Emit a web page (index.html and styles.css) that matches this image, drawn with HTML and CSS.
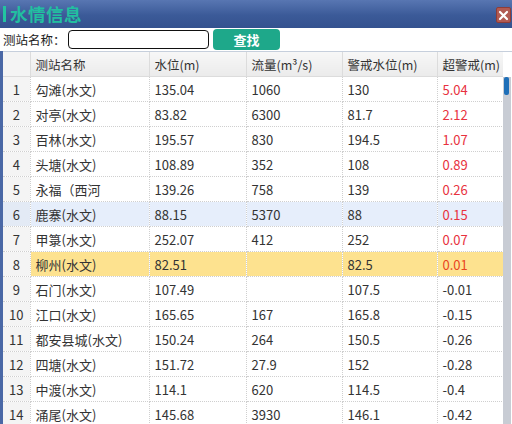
FILE: index.html
```html
<!DOCTYPE html>
<html>
<head>
<meta charset="utf-8">
<link rel="stylesheet" href="styles.css">
</head>
<body>
<div class="win">
  <div class="titlebar">
    <span class="bar"></span><span class="title">水情信息</span>
    <span class="close"><svg width="11" height="11" viewBox="0 0 11 11"><path d="M2 2L9 9M9 2L2 9" stroke="#fff" stroke-width="2.2" stroke-linecap="round"/></svg></span>
  </div>
  <div class="search">
    <span class="label">测站名称：</span>
    <input class="inp" type="text">
    <button class="btn">查找</button>
  </div>
  <div class="gridwrap">
    <div class="grid">
      <table>
        <colgroup><col class="c0"><col class="c1"><col class="c2"><col class="c3"><col class="c4"><col class="c5"></colgroup>
        <thead>
          <tr><th class="rn"></th><th>测站名称</th><th>水位(m)</th><th>流量(m³/s)</th><th>警戒水位(m)</th><th>超警戒(m)</th></tr>
        </thead>
        <tbody>
          <tr><td class="rn">1</td><td>勾滩(水文)</td><td>135.04</td><td>1060</td><td>130</td><td class="red">5.04</td></tr>
          <tr><td class="rn">2</td><td>对亭(水文)</td><td>83.82</td><td>6300</td><td>81.7</td><td class="red">2.12</td></tr>
          <tr><td class="rn">3</td><td>百林(水文)</td><td>195.57</td><td>830</td><td>194.5</td><td class="red">1.07</td></tr>
          <tr><td class="rn">4</td><td>头塘(水文)</td><td>108.89</td><td>352</td><td>108</td><td class="red">0.89</td></tr>
          <tr><td class="rn">5</td><td>永福（西河</td><td>139.26</td><td>758</td><td>139</td><td class="red">0.26</td></tr>
          <tr class="hover"><td class="rn">6</td><td>鹿寨(水文)</td><td>88.15</td><td>5370</td><td>88</td><td class="red">0.15</td></tr>
          <tr><td class="rn">7</td><td>甲箓(水文)</td><td>252.07</td><td>412</td><td>252</td><td class="red">0.07</td></tr>
          <tr class="sel"><td class="rn">8</td><td>柳州(水文)</td><td>82.51</td><td></td><td>82.5</td><td class="red">0.01</td></tr>
          <tr><td class="rn">9</td><td>石门(水文)</td><td>107.49</td><td></td><td>107.5</td><td>-0.01</td></tr>
          <tr><td class="rn">10</td><td>江口(水文)</td><td>165.65</td><td>167</td><td>165.8</td><td>-0.15</td></tr>
          <tr><td class="rn">11</td><td>都安县城(水文)</td><td>150.24</td><td>264</td><td>150.5</td><td>-0.26</td></tr>
          <tr><td class="rn">12</td><td>四塘(水文)</td><td>151.72</td><td>27.9</td><td>152</td><td>-0.28</td></tr>
          <tr><td class="rn">13</td><td>中渡(水文)</td><td>114.1</td><td>620</td><td>114.5</td><td>-0.4</td></tr>
          <tr><td class="rn">14</td><td>涌尾(水文)</td><td>145.68</td><td>3930</td><td>146.1</td><td>-0.42</td></tr>
        </tbody>
      </table>
    </div>
    <div class="scroll"><div class="thumb"></div></div>
  </div>
</div>
</body>
</html>
```

FILE: styles.css
```css
html, body {
  margin: 0;
  padding: 0;
}
body {
  width: 512px;
  height: 424px;
  overflow: hidden;
  font-family: "Noto Sans CJK SC", "Microsoft YaHei", sans-serif;
  font-size: 12px;
  color: #333;
  background: #4a68a6;
}
.win {
  display: flex;
  flex-direction: column;
  height: 424px;
}
.titlebar {
  height: 28px;
  flex: none;
  display: flex;
  align-items: center;
  background: linear-gradient(#5876b2, #3b5a98 55%, #34528f);
  position: relative;
}
.bar {
  width: 3px;
  height: 16px;
  background: #22c4a0;
  margin-left: 3px;
  margin-right: 4px;
}
.title {
  color: #22bfa0;
  font-weight: bold;
  font-size: 17.5px;
  letter-spacing: 0.5px;
  line-height: 28px;
}
.close {
  position: absolute;
  right: 1px;
  top: 7px;
  width: 13px;
  height: 14px;
  background: #b15a52;
  border: 1px solid #8e3d38;
  border-radius: 2px;
  display: flex;
  align-items: center;
  justify-content: center;
}
.search {
  height: 23px;
  flex: none;
  background: #fff;
  display: flex;
  align-items: center;
}
.label {
  font-size: 12.5px;
  color: #222;
  margin-left: 3px;
  width: 65px;
  flex: none;
  white-space: nowrap;
  overflow: hidden;
}
.inp {
  box-sizing: border-box;
  flex: none;
  width: 141px;
  height: 19px;
  border: 1px solid #111;
  border-radius: 4px;
  margin: 0;
  padding: 0;
  outline: none;
}
.btn {
  box-sizing: border-box;
  flex: none;
  margin-left: 4px;
  width: 67px;
  height: 21px;
  border: none;
  border-radius: 4px;
  background: #1ea88a;
  color: #fff;
  font-family: "Noto Sans CJK SC", sans-serif;
  font-size: 13px;
  font-weight: bold;
  padding: 0;
}
.gridwrap {
  flex: 1;
  display: flex;
  margin-left: 3px;
  background: #fff;
  border-top: 1px solid #c6cfdc;
  overflow: hidden;
}
.grid {
  width: 500px;
  flex: none;
  overflow: hidden;
}
table {
  border-collapse: collapse;
  table-layout: fixed;
  width: 500px;
}
col.c0 { width: 27px; }
col.c1 { width: 119px; }
col.c2 { width: 97px; }
col.c3 { width: 96px; }
col.c4 { width: 95px; }
col.c5 { width: 66px; }
th, td {
  height: 24px;
  padding: 0 0 0 5px;
  text-align: left;
  white-space: nowrap;
  overflow: hidden;
  border-right: 1px dotted #cfcfcf;
  border-bottom: 1px dotted #cfcfcf;
  font-size: 13px;
  font-weight: normal;
}
th {
  background: linear-gradient(#f7f7f7, #ebebeb);
  color: #333;
  font-size: 12.5px;
  border-bottom: 1px solid #dcdcdc;
  border-right: 1px solid #dcdcdc;
}
td.rn, th.rn {
  background: #f4f4f4;
  text-align: center;
  padding: 0;
  color: #333;
}
.red { color: #e8313e; }
tr.hover td { background: #e6eefb; }
tr.hover td.rn { background: #e3eaf5; }
tr.sel td { background: #fde28f; }
tr.sel td.rn { background: #f4f4f4; }
tr.sel td.red { color: #e9451f; }
.scroll {
  width: 8px;
  flex: none;
  background: #c8ccd4;
  position: relative;
  margin-top: 25px;
}
.thumb {
  position: absolute;
  left: 1px;
  top: 0;
  width: 5px;
  height: 18px;
  background: #1e6fb8;
  border-radius: 2px;
}
```
